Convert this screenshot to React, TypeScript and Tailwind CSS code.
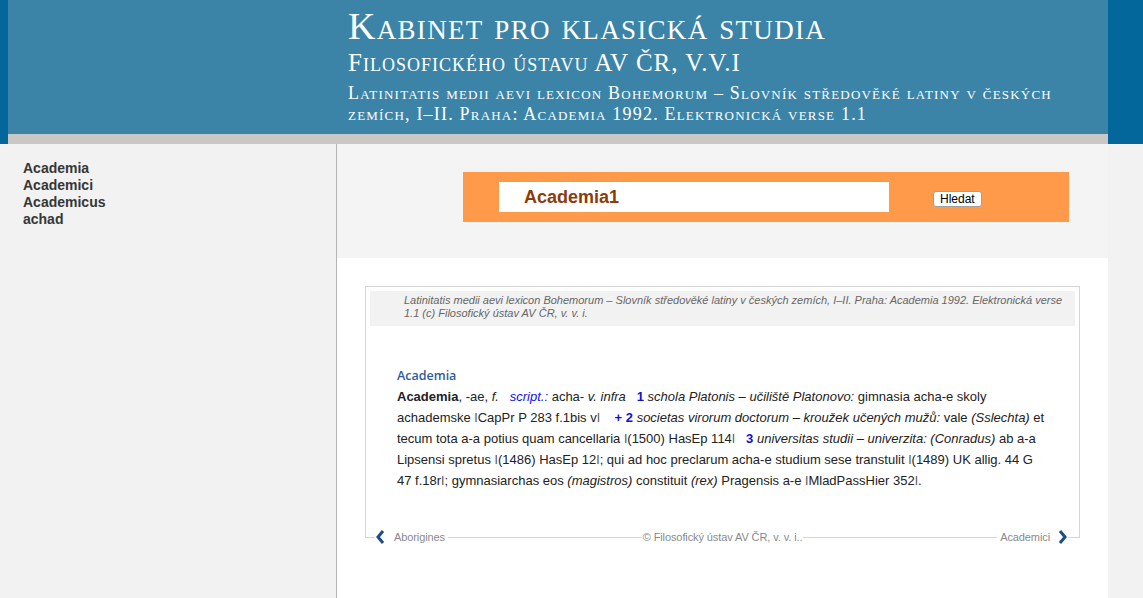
import React from "react";

const Bar = () => <span className="text-[#555]">ǀ</span>;

export default function App() {
  return (
    <div className="w-[1143px] h-[598px] overflow-hidden bg-[#f2f2f2] flex flex-col font-['Liberation_Sans',Arial,sans-serif]">
      {/* Header */}
      <div className="flex h-[144px] shrink-0">
        <div className="w-[8px] bg-[#03679b]" />
        <div className="flex-1 flex flex-col">
          <div className="h-[134px] bg-[#3b84a8] pl-[340px] text-white font-['Liberation_Serif',serif] [font-variant:small-caps]">
            <div className="text-[38px] leading-[38px] pt-[7px] tracking-[1.3px]">Kabinet pro klasická studia</div>
            <div className="text-[25px] leading-[30px] mt-[3px] tracking-[1px]">Filosofického ústavu AV ČR, V.V.I</div>
            <div className="text-[18px] leading-[21px] mt-[5px] w-[740px] tracking-[1.2px]">
              Latinitatis medii aevi lexicon Bohemorum – Slovník středověké latiny v českých
              <br />
              zemích, I–II. Praha: Academia 1992. Elektronická verse 1.1
            </div>
          </div>
          <div className="h-[10px] bg-[#cac8c4]" />
        </div>
        <div className="w-[35px] bg-[#03679b]" />
      </div>

      {/* Body */}
      <div className="flex flex-1">
        <div className="w-[337px] border-r border-[#b5b5b5] pl-[23px] pt-[16px] text-[14px] leading-[17px] font-bold text-[#363636]">
          <div>Academia</div>
          <div>Academici</div>
          <div>Academicus</div>
          <div>achad</div>
        </div>

        <div className="w-[771px] flex flex-col">
          <div className="h-[114px] bg-[#f4f4f4] pt-[28px] pl-[126px]">
            <div className="w-[606px] h-[50px] bg-[#fe9a4a] flex items-start pl-[36px] pt-[10px]">
              <div className="w-[390px] h-[30px] bg-white flex items-center pl-[25px] text-[18px] font-bold text-[#8a3c0c]">
                Academia1
              </div>
              <button className="ml-[44px] mt-[9px] h-[16px] px-[6px] bg-white border border-[#a0a0a0] rounded-[3px] text-[12px] leading-[14px] text-black">
                Hledat
              </button>
            </div>
          </div>

          <div className="flex-1 bg-white pt-[28px] px-[28px]">
            <div className="border-x border-t border-[#d6d6d6] pt-[4px] px-[4px] pb-[46px]">
              <div className="bg-[#f2f2f2] h-[35px] pl-[34px] pr-[12px] pt-[3px] text-[11px] leading-[13px] italic text-[#666]">
                Latinitatis medii aevi lexicon Bohemorum – Slovník středověké latiny v českých zemích, I–II. Praha: Academia 1992. Elektronická verse 1.1 (c) Filosofický ústav AV ČR, v. v. i.
              </div>
              <div className="pl-[27px] pt-[42px]">
                <div className="font-['Open_Sans',sans-serif] font-semibold text-[12.5px] leading-[16px] text-[#2f5d9a]">Academia</div>
                <div className="text-[13px] leading-[21px] text-[#222] mt-[2px] whitespace-nowrap">
                  <b>Academia</b>, -ae, <i>f.</i>&nbsp;&nbsp; <i className="text-[#1010f0]">script.:</i> acha- <i>v. infra</i>&nbsp;&nbsp; <b className="text-[#1010d0]">1</b> <i>schola Platonis – učiliště Platonovo:</i> gimnasia acha-e skoly
                  <br />
                  achademske <Bar />CapPr P 283 f.1bis v<Bar />&nbsp;&nbsp;&nbsp; <b className="text-[#1010d0]">+ 2</b> <i>societas virorum doctorum – kroužek učených mužů:</i> vale <i>(Sslechta)</i> et
                  <br />
                  tecum tota a-a potius quam cancellaria <Bar />(1500) HasEp 114<Bar />&nbsp;&nbsp; <b className="text-[#1010d0]">3</b> <i>universitas studii – univerzita: (Conradus)</i> ab a-a
                  <br />
                  Lipsensi spretus <Bar />(1486) HasEp 12<Bar />; qui ad hoc preclarum acha-e studium sese transtulit <Bar />(1489) UK allig. 44 G
                  <br />
                  47 f.18r<Bar />; gymnasiarchas eos <i>(magistros)</i> constituit <i>(rex)</i> Pragensis a-e <Bar />MladPassHier 352<Bar />.
                </div>
              </div>
            </div>
            <div className="-mt-[7px] h-[14px] flex items-center text-[11px] text-[#8a8a8a] tracking-[-0.1px]">
              <div className="w-[10px] h-px bg-[#d6d6d6]" />
              <svg width="10" height="14" viewBox="0 0 10 14" className="shrink-0">
                <path d="M8 1 L3 7 L8 13" fill="none" stroke="#1f4c85" strokeWidth="3" />
              </svg>
              <span className="ml-[9px] mr-[3px]">Aborigines</span>
              <div className="flex-1 h-px bg-[#d6d6d6]" />
              <span className="px-[1px]">© Filosofický ústav AV ČR, v. v. i..</span>
              <div className="flex-1 h-px bg-[#d6d6d6]" />
              <span className="ml-[3px] mr-[8px]">Academici</span>
              <svg width="10" height="14" viewBox="0 0 10 14" className="shrink-0">
                <path d="M2 1 L7 7 L2 13" fill="none" stroke="#1f4c85" strokeWidth="3" />
              </svg>
              <div className="w-[12px] h-px bg-[#d6d6d6]" />
            </div>
          </div>
        </div>

        <div className="flex-1 bg-[#f2f2f2]" />
      </div>
    </div>
  );
}
